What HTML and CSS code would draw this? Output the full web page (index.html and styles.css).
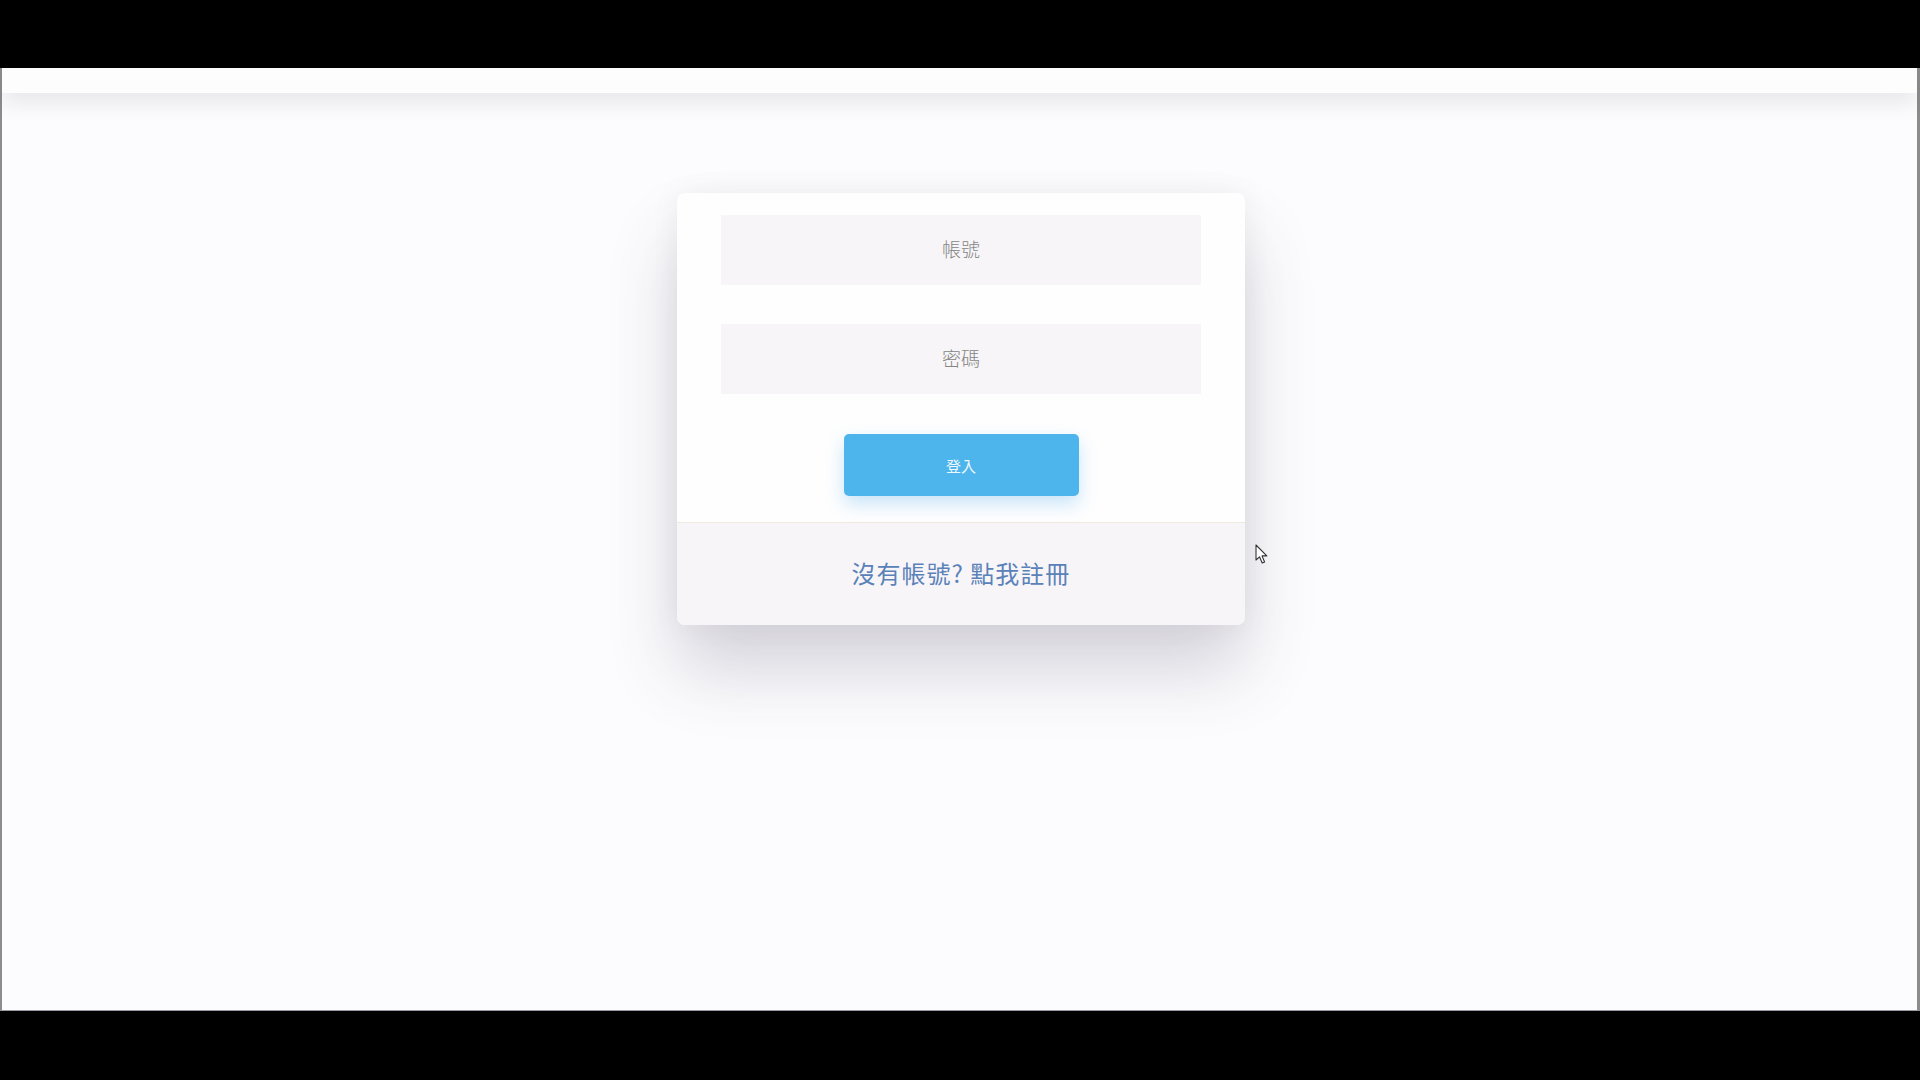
FILE: index.html
```html
<!DOCTYPE html>
<html lang="zh-Hant">
<head>
<meta charset="utf-8">
<title>登入</title>
<link rel="stylesheet" href="styles.css">
</head>
<body>
<div class="frame">
  <div class="nav"></div>
  <main class="stage">
    <div class="card">
      <form class="form">
        <input class="field" type="text" placeholder="帳號">
        <input class="field" type="password" placeholder="密碼">
        <button class="btn" type="button">登入</button>
      </form>
      <div class="card-foot">
        <a class="reg" href="#">沒有帳號? 點我註冊</a>
      </div>
    </div>
  </main>
  <svg class="cursor" width="14" height="22" viewBox="0 0 14 22">
    <path d="M1 1 L1 16 L4.5 12.8 L7.2 19 L9.6 18 L7 11.9 L11.8 11.9 Z" fill="#fff" stroke="#333" stroke-width="1.1" stroke-linejoin="round"/>
  </svg>
</div>
</body>
</html>
```

FILE: styles.css
```css
html, body {
  margin: 0;
  padding: 0;
}
body {
  background: #000;
  width: 1920px;
  height: 1080px;
  overflow: hidden;
  font-family: "Noto Sans CJK TC", "Noto Sans", sans-serif;
}
.frame {
  position: relative;
  margin-top: 68px;
  background: #fcfcfe;
  border-left: 2px solid #8c8c8c;
  border-right: 3px solid #8c8c8c;
  border-bottom: 1px solid #9a9aa6;
  box-sizing: border-box;
  height: 943px;
}
.nav {
  height: 25px;
  background: #fdfdfe;
  box-shadow: 0 10px 22px rgba(0, 0, 0, 0.09);
}
.stage {
  display: flex;
  justify-content: center;
  padding-top: 100px;
  padding-left: 3px;
}
.card {
  width: 568px;
  background: #fefefe;
  border-radius: 8px;
  overflow: hidden;
  box-shadow: 0 45px 70px rgba(60, 50, 80, 0.2), 0 0 30px rgba(0, 0, 0, 0.05);
}
.form {
  display: flex;
  flex-direction: column;
  align-items: center;
  padding: 22px 0 26px;
}
.field {
  width: 480px;
  height: 70px;
  box-sizing: border-box;
  border: none;
  outline: none;
  background: #f7f5f7;
  text-align: center;
  font-family: "Noto Sans CJK TC", "Noto Sans", sans-serif;
  font-size: 19px;
  font-weight: 300;
  color: #555;
  padding: 0 0 4px;
  margin-bottom: 39px;
}
.field:nth-child(2) {
  margin-bottom: 40px;
}
.field::placeholder {
  color: #858585;
}
.btn {
  width: 235px;
  height: 62px;
  border: none;
  border-radius: 5px;
  background: #4db4ec;
  color: #eef8ff;
  font-family: "Noto Sans CJK TC", "Noto Sans", sans-serif;
  font-size: 15px;
  box-shadow: 0 8px 18px rgba(77, 170, 240, 0.3);
}
.card-foot {
  height: 103px;
  background: #f8f5f8;
  border-top: 1px solid #efe9e0;
  display: flex;
  align-items: center;
  justify-content: center;
  box-sizing: border-box;
  padding-bottom: 4px;
}
.reg {
  font-size: 24px;
  color: #5a82b8;
  text-decoration: none;
  letter-spacing: 1px;
}
.cursor {
  position: absolute;
  left: 1253px;
  top: 476px;
}
```
